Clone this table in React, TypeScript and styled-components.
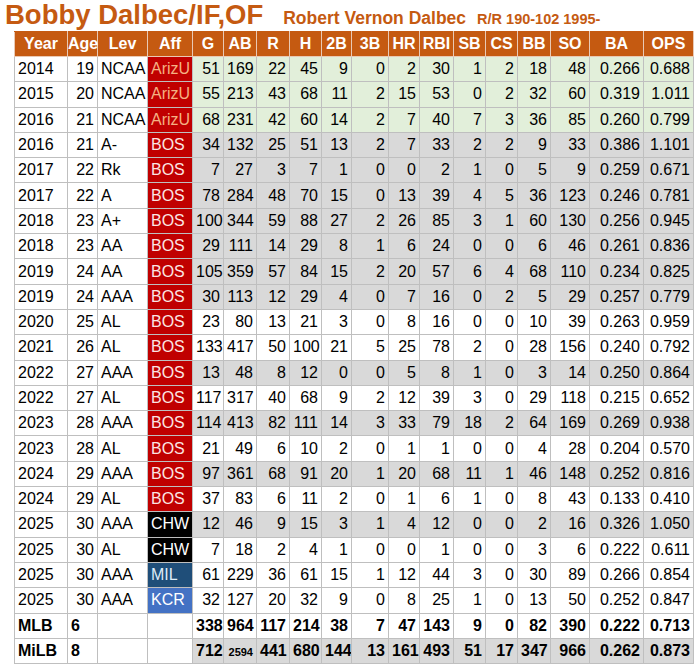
import React from "react";
import styled, { createGlobalStyle } from "styled-components";

const GlobalStyle = createGlobalStyle`
  body {
    margin: 0;
    background: #fff;
    font-family: "Liberation Sans", Arial, sans-serif;
  }
`;

type Shade = "green" | "gray" | "white";
type Team = "ArizU" | "BOS" | "CHW" | "MIL" | "KCR";

interface Season {
  year: number;
  age: number;
  lev: string;
  aff: Team;
  shade: Shade;
  stats: (number | string)[];
}

const teamColors: Record<Team, { bg: string; fg: string }> = {
  ArizU: { bg: "#c00000", fg: "#f4b183" },
  BOS: { bg: "#c00000", fg: "#fbe5e3" },
  CHW: { bg: "#000000", fg: "#ffffff" },
  MIL: { bg: "#1f4e79", fg: "#ddebf7" },
  KCR: { bg: "#4472c4", fg: "#ffffff" },
};

const shades: Record<Shade, string> = {
  green: "#e2efda",
  gray: "#d9d9d9",
  white: "#ffffff",
};

const columns = [
  { label: "Year", width: 53 },
  { label: "Age", width: 30 },
  { label: "Lev", width: 50 },
  { label: "Aff", width: 45 },
  { label: "G", width: 31 },
  { label: "AB", width: 33 },
  { label: "R", width: 33 },
  { label: "H", width: 32 },
  { label: "2B", width: 30 },
  { label: "3B", width: 37 },
  { label: "HR", width: 31 },
  { label: "RBI", width: 34 },
  { label: "SB", width: 32 },
  { label: "CS", width: 32 },
  { label: "BB", width: 33 },
  { label: "SO", width: 39 },
  { label: "BA", width: 54 },
  { label: "OPS", width: 50 },
];

const seasons: Season[] = [
  { year: 2014, age: 19, lev: "NCAA", aff: "ArizU", shade: "green", stats: [51, 169, 22, 45, 9, 0, 2, 30, 1, 2, 18, 48, "0.266", "0.688"] },
  { year: 2015, age: 20, lev: "NCAA", aff: "ArizU", shade: "green", stats: [55, 213, 43, 68, 11, 2, 15, 53, 0, 2, 32, 60, "0.319", "1.011"] },
  { year: 2016, age: 21, lev: "NCAA", aff: "ArizU", shade: "green", stats: [68, 231, 42, 60, 14, 2, 7, 40, 7, 3, 36, 85, "0.260", "0.799"] },
  { year: 2016, age: 21, lev: "A-", aff: "BOS", shade: "gray", stats: [34, 132, 25, 51, 13, 2, 7, 33, 2, 2, 9, 33, "0.386", "1.101"] },
  { year: 2017, age: 22, lev: "Rk", aff: "BOS", shade: "gray", stats: [7, 27, 3, 7, 1, 0, 0, 2, 1, 0, 5, 9, "0.259", "0.671"] },
  { year: 2017, age: 22, lev: "A", aff: "BOS", shade: "gray", stats: [78, 284, 48, 70, 15, 0, 13, 39, 4, 5, 36, 123, "0.246", "0.781"] },
  { year: 2018, age: 23, lev: "A+", aff: "BOS", shade: "gray", stats: [100, 344, 59, 88, 27, 2, 26, 85, 3, 1, 60, 130, "0.256", "0.945"] },
  { year: 2018, age: 23, lev: "AA", aff: "BOS", shade: "gray", stats: [29, 111, 14, 29, 8, 1, 6, 24, 0, 0, 6, 46, "0.261", "0.836"] },
  { year: 2019, age: 24, lev: "AA", aff: "BOS", shade: "gray", stats: [105, 359, 57, 84, 15, 2, 20, 57, 6, 4, 68, 110, "0.234", "0.825"] },
  { year: 2019, age: 24, lev: "AAA", aff: "BOS", shade: "gray", stats: [30, 113, 12, 29, 4, 0, 7, 16, 0, 2, 5, 29, "0.257", "0.779"] },
  { year: 2020, age: 25, lev: "AL", aff: "BOS", shade: "white", stats: [23, 80, 13, 21, 3, 0, 8, 16, 0, 0, 10, 39, "0.263", "0.959"] },
  { year: 2021, age: 26, lev: "AL", aff: "BOS", shade: "white", stats: [133, 417, 50, 100, 21, 5, 25, 78, 2, 0, 28, 156, "0.240", "0.792"] },
  { year: 2022, age: 27, lev: "AAA", aff: "BOS", shade: "gray", stats: [13, 48, 8, 12, 0, 0, 5, 8, 1, 0, 3, 14, "0.250", "0.864"] },
  { year: 2022, age: 27, lev: "AL", aff: "BOS", shade: "white", stats: [117, 317, 40, 68, 9, 2, 12, 39, 3, 0, 29, 118, "0.215", "0.652"] },
  { year: 2023, age: 28, lev: "AAA", aff: "BOS", shade: "gray", stats: [114, 413, 82, 111, 14, 3, 33, 79, 18, 2, 64, 169, "0.269", "0.938"] },
  { year: 2023, age: 28, lev: "AL", aff: "BOS", shade: "white", stats: [21, 49, 6, 10, 2, 0, 1, 1, 0, 0, 4, 28, "0.204", "0.570"] },
  { year: 2024, age: 29, lev: "AAA", aff: "BOS", shade: "gray", stats: [97, 361, 68, 91, 20, 1, 20, 68, 11, 1, 46, 148, "0.252", "0.816"] },
  { year: 2024, age: 29, lev: "AL", aff: "BOS", shade: "white", stats: [37, 83, 6, 11, 2, 0, 1, 6, 1, 0, 8, 43, "0.133", "0.410"] },
  { year: 2025, age: 30, lev: "AAA", aff: "CHW", shade: "gray", stats: [12, 46, 9, 15, 3, 1, 4, 12, 0, 0, 2, 16, "0.326", "1.050"] },
  { year: 2025, age: 30, lev: "AL", aff: "CHW", shade: "white", stats: [7, 18, 2, 4, 1, 0, 0, 1, 0, 0, 3, 6, "0.222", "0.611"] },
  { year: 2025, age: 30, lev: "AAA", aff: "MIL", shade: "white", stats: [61, 229, 36, 61, 15, 1, 12, 44, 3, 0, 30, 89, "0.266", "0.854"] },
  { year: 2025, age: 30, lev: "AAA", aff: "KCR", shade: "white", stats: [32, 127, 20, 32, 9, 0, 8, 25, 1, 0, 13, 50, "0.252", "0.847"] },
];

// AB for MiLB is printed small in the source sheet, so it is kept as a string
const totals = [
  { label: "MLB", count: 6, shade: "white" as Shade, stats: [338, 964, 117, 214, 38, 7, 47, 143, 9, 0, 82, 390, "0.222", "0.713"] },
  { label: "MiLB", count: 8, shade: "gray" as Shade, stats: [712, "2594", 441, 680, 144, 13, 161, 493, 51, 17, 347, 966, "0.262", "0.873"] },
];

const Page = styled.div`
  padding: 0 7px 0 5px;
`;

const TitleLine = styled.div`
  display: flex;
  align-items: baseline;
  height: 31px;
  color: #c55a11;
  font-weight: bold;
  white-space: nowrap;
`;

const Name = styled.span`
  font-size: 27.5px;
  line-height: 30px;
`;

const FullName = styled.span`
  font-size: 17.5px;
  margin-left: 20px;
`;

const Bio = styled.span`
  font-size: 14.5px;
  margin-left: 11px;
`;

const Table = styled.table`
  margin-left: 9px;
  border-collapse: collapse;
  table-layout: fixed;
  width: 679px;
  font-size: 16px;
  color: #000;
`;

const HeadCell = styled.th`
  background: #c55a11;
  color: #fff;
  font-weight: bold;
  text-align: center;
  height: 24px;
  padding: 0;
  border: 1px solid #e9c9b4;
  border-top-color: #c55a11;
`;

const Row = styled.tr`
  height: 25.3px;
`;

const Cell = styled.td<{ $align?: "left" | "right"; $bg?: string; $bold?: boolean }>`
  border: 1px solid #bfbfbf;
  padding: 0 3px;
  white-space: nowrap;
  overflow: hidden;
  text-align: ${(p) => p.$align ?? "right"};
  background: ${(p) => p.$bg ?? "#fff"};
  font-weight: ${(p) => (p.$bold ? "bold" : "normal")};
`;

const AffCell = styled.td<{ $team?: Team }>`
  border: 1px solid #bfbfbf;
  padding: 0 3px;
  text-align: left;
  background: ${(p) => (p.$team ? teamColors[p.$team].bg : "#fff")};
  color: ${(p) => (p.$team ? teamColors[p.$team].fg : "#000")};
`;

const Small = styled.span`
  font-size: 11px;
`;

const App = () => {
  return (
    <Page>
      <GlobalStyle />
      <TitleLine>
        <Name>Bobby Dalbec/IF,OF</Name>
        <FullName>Robert Vernon Dalbec</FullName>
        <Bio>R/R 190-102 1995-</Bio>
      </TitleLine>
      <Table>
        <colgroup>
          {columns.map((c) => (
            <col key={c.label} style={{ width: c.width }} />
          ))}
        </colgroup>
        <thead>
          <tr>
            {columns.map((c) => (
              <HeadCell key={c.label}>{c.label}</HeadCell>
            ))}
          </tr>
        </thead>
        <tbody>
          {seasons.map((s, i) => (
            <Row key={i}>
              <Cell $align="left">{s.year}</Cell>
              <Cell>{s.age}</Cell>
              <Cell $align="left">{s.lev}</Cell>
              <AffCell $team={s.aff}>{s.aff}</AffCell>
              {s.stats.map((v, j) => (
                <Cell key={j} $bg={shades[s.shade]}>
                  {v}
                </Cell>
              ))}
            </Row>
          ))}
          {totals.map((t) => (
            <Row key={t.label}>
              <Cell $align="left" $bold>{t.label}</Cell>
              <Cell $align="left" $bold>{t.count}</Cell>
              <Cell />
              <AffCell />
              {t.stats.map((v, j) => (
                <Cell key={j} $bg={shades[t.shade]} $bold>
                  {typeof v === "string" && !v.includes(".") ? <Small>{v}</Small> : v}
                </Cell>
              ))}
            </Row>
          ))}
        </tbody>
      </Table>
    </Page>
  );
};

export default App;
